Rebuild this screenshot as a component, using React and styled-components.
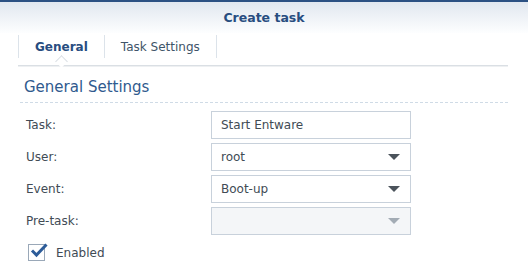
import React from "react";
import styled, { createGlobalStyle } from "styled-components";

const GlobalStyle = createGlobalStyle`
  body {
    margin: 0;
    background: #fff;
    font-family: "DejaVu Sans", Verdana, sans-serif;
  }
`;

const Window = styled.div`
  width: 528px;
  height: 276px;
  background: #fff;
  overflow: hidden;
`;

const TitleBar = styled.div`
  height: 31px;
  border-top: 2px solid #2c5183;
  background: linear-gradient(#e1e7ef, #fdfeff);
  display: flex;
  align-items: center;
  justify-content: center;
  color: #284d80;
  font-weight: bold;
  font-size: 12.5px;
`;

const Tabs = styled.div`
  margin: 2px 20px 0 18px;
  height: 30px;
  display: flex;
  position: relative;
  border-bottom: 1px solid #dadfe4;
  box-shadow: 0 1px 0 #eef0f2;
`;

const Tab = styled.div`
  height: 23px;
  padding: 0 ${(p) => p.$pad}px;
  display: flex;
  align-items: center;
  border-left: ${(p) => (p.$first ? "1px solid #dce3ea" : "none")};
  border-right: 1px solid #dce3ea;
  color: ${(p) => (p.$active ? "#284d80" : "#405468")};
  font-weight: ${(p) => (p.$active ? "bold" : "normal")};
  font-size: 12px;
  position: relative;
`;

const Notch = styled.div`
  position: absolute;
  left: 38px;
  bottom: -8px;
  width: 8px;
  height: 8px;
  background: #fff;
  border-left: 1px solid #dadfe4;
  border-top: 1px solid #dadfe4;
  transform: rotate(45deg);
`;

const Section = styled.div`
  padding: 0 20px 0 18px;
`;

const SectionTitle = styled.div`
  margin-top: 12px;
  padding: 0 0 6px 4px;
  font-size: 15px;
  color: #2f5a8e;
  border-bottom: 1px dashed #cfdbe6;
  margin-left: 2px;
`;

const Form = styled.div`
  margin-top: 8px;
  display: flex;
  flex-direction: column;
  gap: 4px;
`;

const Row = styled.div`
  display: flex;
  align-items: center;
  height: 28px;
`;

const Label = styled.div`
  width: 185px;
  padding-left: 8px;
  font-size: 12px;
  color: #414b55;
`;

const Field = styled.div`
  width: 189px;
  height: 26px;
  border: 1px solid #c8d1db;
  background: ${(p) => (p.$disabled ? "#f4f6f8" : "#fff")};
  display: flex;
  align-items: center;
  justify-content: space-between;
  padding: 0 0 0 9px;
  box-sizing: content-box;
  font-size: 12px;
  color: #414b55;
`;

const Arrow = styled.span`
  width: 0;
  height: 0;
  margin-right: 10px;
  border-left: 6px solid transparent;
  border-right: 6px solid transparent;
  border-top: 6px solid ${(p) => (p.$disabled ? "#a3acb5" : "#4b535b")};
`;

const CheckRow = styled.label`
  display: flex;
  align-items: center;
  gap: 11px;
  margin: 9px 0 0 10px;
  font-size: 12px;
  color: #414b55;
`;

const Box = styled.span`
  width: 15px;
  height: 15px;
  border: 1px solid #9aa8b8;
  position: relative;
  display: inline-block;
`;

const Check = styled.svg`
  position: absolute;
  left: 1px;
  top: -3px;
`;

export default function App() {
  return (
    <Window>
      <GlobalStyle />
      <TitleBar>Create task</TitleBar>
      <Tabs>
        <Tab $first $active $pad={16}>
          General
          <Notch />
        </Tab>
        <Tab $pad={16}>Task Settings</Tab>
      </Tabs>
      <Section>
        <SectionTitle>General Settings</SectionTitle>
        <Form>
          <Row>
            <Label>Task:</Label>
            <Field>Start Entware</Field>
          </Row>
          <Row>
            <Label>User:</Label>
            <Field>
              root
              <Arrow />
            </Field>
          </Row>
          <Row>
            <Label>Event:</Label>
            <Field>
              Boot-up
              <Arrow />
            </Field>
          </Row>
          <Row>
            <Label>Pre-task:</Label>
            <Field $disabled>
              <span />
              <Arrow $disabled />
            </Field>
          </Row>
        </Form>
        <CheckRow>
          <Box>
            <Check width="18" height="16" viewBox="0 0 18 16">
              <path d="M2 8.5 L6.5 13 L16.5 2.5" fill="none" stroke="#2d5c99" strokeWidth="3" />
            </Check>
          </Box>
          Enabled
        </CheckRow>
      </Section>
    </Window>
  );
}
